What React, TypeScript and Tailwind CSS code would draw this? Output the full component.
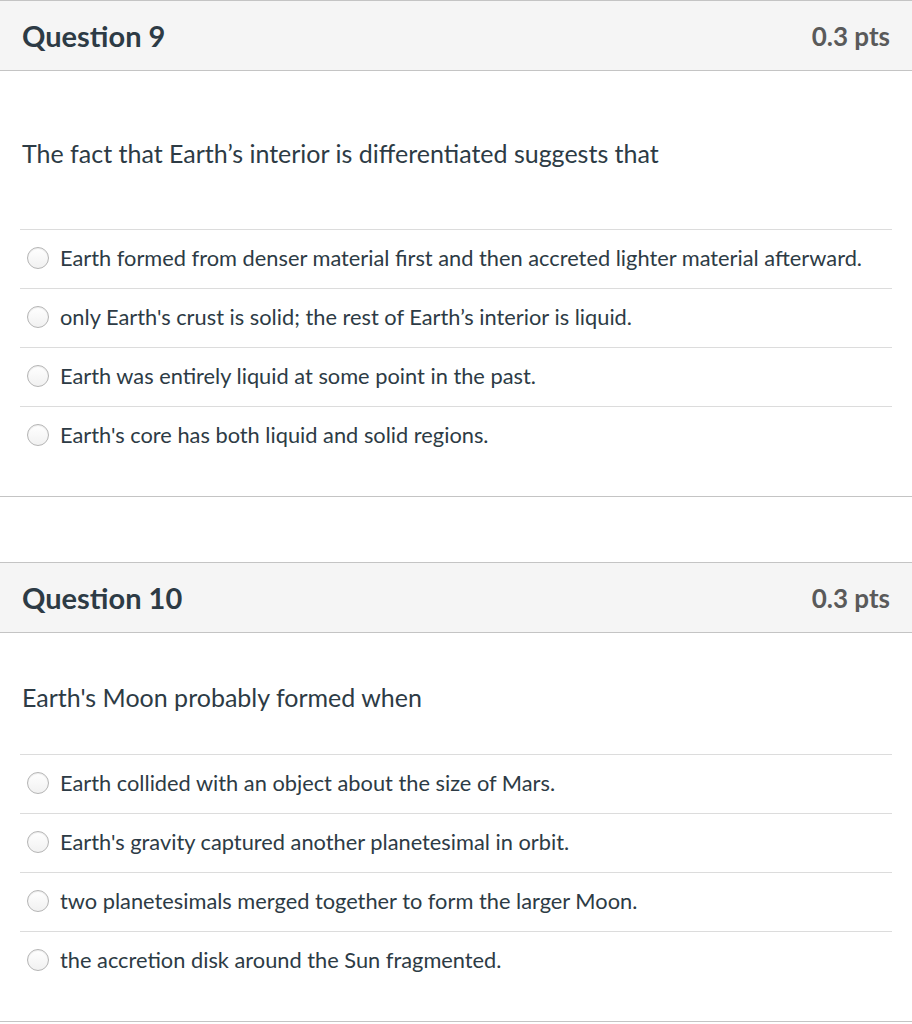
const questions = [
  {
    title: "Question 9",
    pts: "0.3 pts",
    text: "The fact that Earth\u2019s interior is differentiated suggests that",
    bodyPad: "pt-[66px] pb-[59px]",
    answers: [
      "Earth formed from denser material first and then accreted lighter material afterward.",
      "only Earth's crust is solid; the rest of Earth\u2019s interior is liquid.",
      "Earth was entirely liquid at some point in the past.",
      "Earth's core has both liquid and solid regions.",
    ],
  },
  {
    title: "Question 10",
    pts: "0.3 pts",
    text: "Earth's Moon probably formed when",
    bodyPad: "pt-[48px] pb-[40px]",
    answers: [
      "Earth collided with an object about the size of Mars.",
      "Earth's gravity captured another planetesimal in orbit.",
      "two planetesimals merged together to form the larger Moon.",
      "the accretion disk around the Sun fragmented.",
    ],
  },
];

function Radio() {
  return (
    <span className="w-[22px] h-[22px] shrink-0 rounded-full border border-[#b5b5b5] bg-gradient-to-b from-white to-[#f1f1f1] shadow-[inset_0_1px_1px_rgba(0,0,0,0.08)]" />
  );
}

function Question({ q }: { q: (typeof questions)[number] }) {
  return (
    <section className="border-y border-[#c4c4c4]">
      <div className="h-[70px] bg-[#f5f5f5] border-b border-[#c4c4c4] px-[22px] flex items-center justify-between">
        <h2 className="text-[29px] font-bold text-[#2d3b45] leading-none">{q.title}</h2>
        <span className="text-[26px] font-bold text-[#5a5a5a] leading-none">{q.pts}</span>
      </div>
      <div className="px-[20px] pb-[31px]">
        <p className={`text-[25px] leading-[33px] text-[#2d3b45] px-[2px] ${q.bodyPad}`}>{q.text}</p>
        <ul>
          {q.answers.map((a) => (
            <li
              key={a}
              className="h-[59px] border-t border-[#dcdcdc] flex items-center gap-[11px] pl-[7px] pb-[2px]"
            >
              <Radio />
              <span className="text-[21.8px] text-[#2d3b45]">{a}</span>
            </li>
          ))}
        </ul>
      </div>
    </section>
  );
}

export default function App() {
  return (
    <div className="w-[912px] bg-white font-['Lato',sans-serif]">
      <div className="flex flex-col gap-[65px]">
        {questions.map((q) => (
          <Question key={q.title} q={q} />
        ))}
      </div>
    </div>
  );
}
